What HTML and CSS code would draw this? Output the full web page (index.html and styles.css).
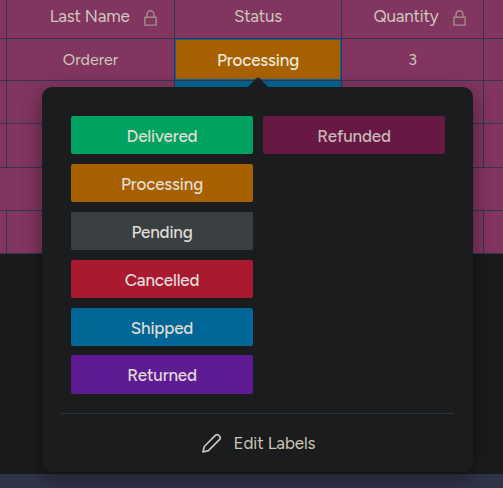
FILE: index.html
```html
<!DOCTYPE html>
<html lang="en">
<head>
<meta charset="utf-8">
<title>Orders</title>
<link rel="stylesheet" href="styles.css">
</head>
<body>
<main class="board">
  <div class="row head">
    <div class="cell"></div>
    <div class="cell locked"><span>Last Name</span><svg class="lock" viewBox="0 0 13 16"><path d="M.9 7.2h11.2v7.9H.9zM3 7.2V4.4a3.5 3.7 0 0 1 7 0v2.8"/></svg></div>
    <div class="cell"><span>Status</span></div>
    <div class="cell locked"><span>Quantity</span><svg class="lock" viewBox="0 0 13 16"><path d="M.9 7.2h11.2v7.9H.9zM3 7.2V4.4a3.5 3.7 0 0 1 7 0v2.8"/></svg></div>
    <div class="cell"></div>
  </div>
  <div class="row first">
    <div class="cell"></div>
    <div class="cell"><span>Orderer</span></div>
    <div class="cell selected"><span>Processing</span></div>
    <div class="cell"><span>3</span></div>
    <div class="cell"></div>
  </div>
  <div class="row"><div class="cell"></div><div class="cell"></div><div class="cell shipped"></div><div class="cell"></div><div class="cell"></div></div>
  <div class="row tall"><div class="cell"></div><div class="cell"></div><div class="cell"></div><div class="cell"></div><div class="cell"></div></div>
  <div class="row group"></div>
  <div class="row"><div class="cell"></div><div class="cell"></div><div class="cell"></div><div class="cell"></div><div class="cell"></div></div>
</main>
<footer class="strip"></footer>
<section class="popup">
  <svg class="arrow" viewBox="0 0 20 10"><path d="M0 10 8.5 1.2Q10-.2 11.5 1.2L20 10z"/></svg>
  <div class="labels">
    <div class="label delivered"><span>Delivered</span></div>
    <div class="label processing"><span>Processing</span></div>
    <div class="label pending"><span>Pending</span></div>
    <div class="label cancelled"><span>Cancelled</span></div>
    <div class="label shipped"><span>Shipped</span></div>
    <div class="label returned"><span>Returned</span></div>
    <div class="label refunded"><span>Refunded</span></div>
  </div>
  <div class="edit">
    <svg class="pencil" viewBox="0 0 20 20"><path d="M1 19l1.3-5.5L13.6 2.2a2 2 0 0 1 2.9 0l1.2 1.2a2 2 0 0 1 0 2.9L6.4 17.6z"/></svg>
    <span>Edit Labels</span>
  </div>
</section>
</body>
</html>
```
FILE: styles.css
```css
* { box-sizing: border-box; }
body {
  margin: 0;
  height: 488px;
  overflow: hidden;
  position: relative;
  display: flex;
  flex-direction: column;
  background: #191b1c;
  color: #d0c7bd;
  font: 16px/20px Figtree, Lato, sans-serif;
}
span { white-space: nowrap; }
.board { flex: 1; }
.row {
  display: grid;
  grid-template-columns: 7px 168px 167px 142px 1fr;
  height: 43px;
  background: #81355f;
  border-bottom: 1px solid #2e374f;
}
.head { height: 39px; }
.first { height: 42px; }
.tall { height: 44px; }
.cell {
  display: flex;
  align-items: center;
  justify-content: center;
  border-right: 1px solid #2e374f;
}
.cell:last-child { border-right: 0; }
.head .cell {
  padding-bottom: 6px;
  font-size: 17px;
  letter-spacing: -.2px;
}
.head .locked {
  justify-content: flex-end;
  gap: 14.5px;
  padding-right: 17px;
}
.cell.selected {
  padding-top: 1px;
  background: #a86100;
  box-shadow: inset 0 0 0 1px #1261a3;
  color: #ece6de;
  font-size: 17px;
  font-weight: 500;
  letter-spacing: -.17px;
}
.lock {
  width: 13px;
  height: 16px;
  margin-top: 3px;
  fill: none;
  stroke: #a58c86;
  stroke-width: 1.4;
}
.strip { height: 14px; background: #303448; }
.popup {
  position: absolute;
  left: 42px;
  top: 87px;
  width: 431px;
  height: 385px;
  padding: 29px 19px 0;
  border-radius: 10px;
  background: #1a1c1d;
  box-shadow: 0 6px 20px rgba(0, 0, 0, .42);
  font-size: 17px;
  font-weight: 500;
  letter-spacing: -.17px;
}
.arrow {
  position: absolute;
  left: 206px;
  top: -10px;
  width: 20px;
  height: 10px;
  fill: #1a1c1d;
}
.labels {
  display: grid;
  grid-template: repeat(6, 38px) / 182px 182px;
  grid-auto-flow: column;
  gap: 10px;
  height: 297px;
  padding: 0 10px;
}
.label {
  display: flex;
  align-items: center;
  justify-content: center;
  padding-top: 2px;
  border-radius: 2px;
  color: #e0dcd6;
}
.label.returned { height: 39px; margin-top: -1px; padding-top: 1px; }
.edit {
  display: flex;
  align-items: center;
  justify-content: center;
  gap: 12px;
  height: 59px;
  padding: 0 0 1px 2px;
  border-top: 1px solid #303335;
  color: #cbc4b9;
  font-weight: 400;
  letter-spacing: -.1px;
}
.pencil {
  width: 20px;
  height: 20px;
  fill: none;
  stroke: #cbc4b9;
  stroke-width: 1.7;
  stroke-linejoin: round;
}
.delivered { background: #00a25f; }
.processing { background: #a86100; }
.pending { background: #3a3f41; }
.cancelled { background: #a91a30; }
.shipped { background: #006796; }
.returned { background: #5e1b94; }
.refunded { background: #671943; color: #c9b9b9; }
```
